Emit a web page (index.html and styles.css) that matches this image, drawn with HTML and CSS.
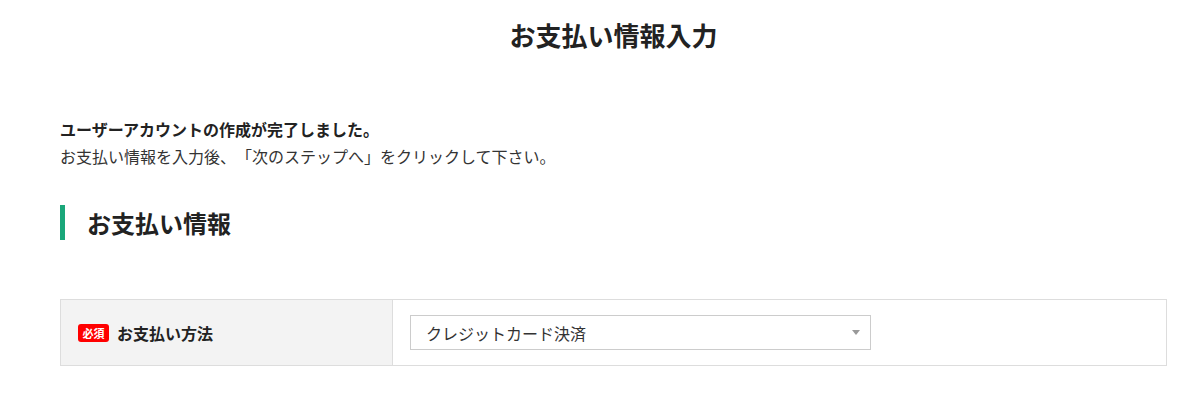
FILE: index.html
```html
<!DOCTYPE html>
<html lang="ja">
<head>
  <meta charset="UTF-8">
  <meta name="viewport" content="width=device-width, initial-scale=1.0">
  <title>お支払い情報入力</title>
  <link rel="stylesheet" href="styles.css">
</head>
<body>
  <div class="container">
    <h1 class="page-title">お支払い情報入力</h1>

    <div class="message">
      <p class="message-lead">ユーザーアカウントの作成が完了しました。</p>
      <p>お支払い情報を入力後、「次のステップへ」をクリックして下さい。</p>
    </div>

    <h2 class="section-title">お支払い情報</h2>

    <table class="form-table">
      <tr>
        <th><span class="required">必須</span>お支払い方法</th>
        <td>
          <div class="select-wrap">
            <select name="payment_method">
              <option value="credit">クレジットカード決済</option>
            </select>
          </div>
        </td>
      </tr>
    </table>
  </div>
</body>
</html>
```

FILE: styles.css
```css
body {
  margin: 0;
  font-family: "Noto Sans CJK JP", "Noto Sans", sans-serif;
  color: #333;
  background-color: #fff;
  text-spacing-trim: space-all;
}
.container {
  padding: 0 33px 0 60px;
}
.page-title {
  margin: 0;
  padding-top: 15px;
  font-size: 26px;
  line-height: 39px;
  text-align: center;
  color: #222;
}
.message {
  margin-top: 62px;
  font-size: 16px;
  line-height: 27px;
}
.message p {
  margin: 0;
}
.message-lead {
  font-weight: bold;
  color: #222;
}
.section-title {
  margin: 35px 0 0;
  padding-left: 22px;
  border-left: 5px solid #1aa77a;
  font-size: 24px;
  line-height: 35px;
  color: #222;
}
.form-table {
  width: 100%;
  margin-top: 59px;
  border-collapse: collapse;
  border: 1px solid #ddd;
}
.form-table th {
  width: 314px;
  padding: 0 0 0 17px;
  background-color: #f3f3f3;
  border-right: 1px solid #ddd;
  text-align: left;
  font-size: 16px;
  color: #222;
  white-space: nowrap;
}
.form-table td {
  padding: 15px 18px 15px 17px;
}
.required {
  display: inline-block;
  width: 31px;
  height: 18px;
  margin-right: 8px;
  border-radius: 3px;
  background-color: #f00;
  color: #fff;
  font-size: 11px;
  line-height: 18px;
  text-align: center;
  vertical-align: 2px;
}
.select-wrap {
  position: relative;
  width: 461px;
}
.select-wrap::after {
  content: "";
  position: absolute;
  right: 11px;
  top: 15px;
  border-left: 4px solid transparent;
  border-right: 4px solid transparent;
  border-top: 5px solid #999;
}
.select-wrap select {
  appearance: none;
  -webkit-appearance: none;
  width: 100%;
  height: 35px;
  padding: 0 30px 0 15px;
  border: 1px solid #ccc;
  border-radius: 0;
  background-color: #fff;
  font-family: inherit;
  font-size: 16px;
  color: #333;
}
```
